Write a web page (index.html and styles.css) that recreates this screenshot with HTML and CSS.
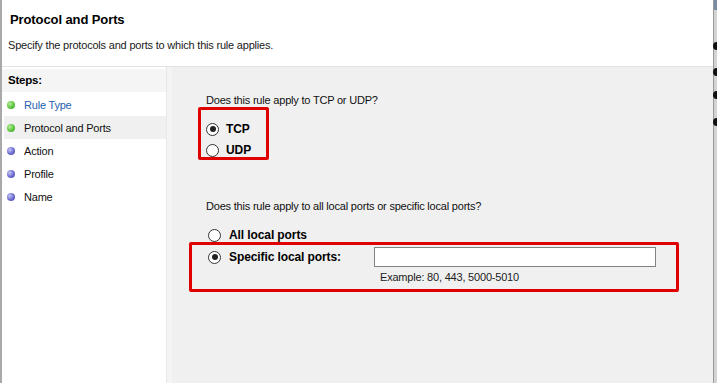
FILE: index.html
```html
<!DOCTYPE html>
<html>
<head>
<meta charset="utf-8">
<link rel="stylesheet" href="styles.css">
</head>
<body>
<div class="window">
  <div class="main">
    <header class="header">
      <h1 class="title">Protocol and Ports</h1>
      <p class="subtitle">Specify the protocols and ports to which this rule applies.</p>
    </header>
    <div class="body">
      <nav class="steps">
        <div class="steps-head">Steps:</div>
        <ul class="step-list">
          <li class="step done link"><span class="dot green"></span>Rule Type</li>
          <li class="step done current"><span class="dot green"></span>Protocol and Ports</li>
          <li class="step"><span class="dot blue"></span>Action</li>
          <li class="step"><span class="dot blue"></span>Profile</li>
          <li class="step"><span class="dot blue"></span>Name</li>
        </ul>
      </nav>
      <div class="divider"></div>
      <section class="content">
        <p class="question q1">Does this rule apply to TCP or UDP?</p>
        <div class="mark mark-proto">
          <label class="option"><span class="radio checked"></span><span class="opt-label">TCP</span></label>
          <label class="option"><span class="radio"></span><span class="opt-label">UDP</span></label>
        </div>
        <p class="question q2">Does this rule apply to all local ports or specific local ports?</p>
        <label class="option all-ports"><span class="radio"></span><span class="opt-label">All local ports</span></label>
        <div class="mark mark-ports">
          <div class="specific-row">
            <label class="option specific"><span class="radio checked"></span><span class="opt-label">Specific local ports:</span></label>
            <div class="port-field">
              <div class="textbox"></div>
              <div class="example">Example: 80, 443, 5000-5010</div>
            </div>
          </div>
        </div>
      </section>
    </div>
  </div>
  <div class="edge">
    <span class="edge-top"></span>
    <span class="nub n1"></span>
    <span class="nub n2"></span>
    <span class="nub n3"></span>
    <span class="nub n4"></span>
  </div>
</div>
</body>
</html>
```
FILE: styles.css
```css
* { box-sizing: border-box; }
html, body { margin: 0; padding: 0; }
body {
  width: 717px;
  height: 383px;
  overflow: hidden;
  font-family: "Liberation Sans", Arial, sans-serif;
  font-size: 11px;
  color: #000;
  background: #fff;
}
.window {
  display: flex;
  height: 383px;
  border-left: 2px solid #a9a9a9;
}
.main {
  flex: 1;
  display: flex;
  flex-direction: column;
  min-width: 0;
}
.header {
  height: 67px;
  background: #fff;
  border-bottom: 1px solid #e3e3e3;
  padding: 11px 0 0 8px;
}
.title {
  margin: 0;
  font-size: 13px;
  font-weight: bold;
  letter-spacing: -0.1px;
  line-height: 18px;
}
.subtitle {
  margin: 9px 0 0 -2px;
  font-size: 11px;
  letter-spacing: -0.2px;
  line-height: 14px;
  color: #1a1a1a;
}
.body {
  flex: 1;
  display: flex;
}
.steps {
  width: 164px;
  background: #fff;
  padding-top: 2px;
}
.steps-head {
  height: 23px;
  background: #f5f5f5;
  font-weight: bold;
  font-size: 11.5px;
  letter-spacing: -0.2px;
  padding: 5px 0 0 6px;
}
.step-list {
  list-style: none;
  margin: 1px 0 0 0;
  padding: 0;
}
.step {
  height: 23px;
  display: flex;
  align-items: center;
  padding-left: 5px;
  letter-spacing: -0.2px;
  color: #111;
}
.step.link { color: #1f5fb0; }
.step.current { background: #f0f0f0; margin-left: 2px; padding-left: 3px; }
.dot {
  width: 8px;
  height: 8px;
  border-radius: 50%;
  margin-right: 9px;
  flex: none;
}
.dot.green { background: radial-gradient(circle at 35% 35%, #b6ee9e 0, #5cc43c 55%, #3e9a2a 100%); }
.dot.blue { background: radial-gradient(circle at 35% 35%, #c4c4f4 0, #6b6bd0 55%, #4848a8 100%); }
.divider {
  width: 6px;
  background: #f4f4f4;
  border-left: 1px solid #e8e8e8;
}
.content {
  flex: 1;
  background: #f0f0f0;
  padding: 26px 0 0 34px;
  display: flex;
  flex-direction: column;
  align-items: flex-start;
}
.question {
  margin: 0;
  line-height: 14px;
  letter-spacing: -0.2px;
  color: #111;
}
.mark {
  border: 3px solid #e00000;
  border-radius: 2px;
}
.mark-proto {
  margin: 0 0 0 -8px;
  width: 71px;
  padding: 12px 0 0 5px;
  display: flex;
  flex-direction: column;
  gap: 7px;
}
.mark-proto .option { height: 14px; }
.option {
  display: flex;
  align-items: center;
  height: 18px;
}
.radio {
  width: 13px;
  height: 13px;
  border-radius: 50%;
  border: 1px solid #333;
  background: #fff;
  flex: none;
  position: relative;
  margin-right: 7px;
}
.radio.checked::after {
  content: "";
  position: absolute;
  left: 2.5px;
  top: 2.5px;
  width: 6px;
  height: 6px;
  border-radius: 50%;
  background: #222;
}
.opt-label {
  font-weight: bold;
  font-size: 12px;
  letter-spacing: -0.1px;
}
.q2 { margin-top: 39px; }
.all-ports {
  margin: 13px 0 0 2px;
}
.all-ports .radio { margin-right: 8px; }
.mark-ports {
  margin: -2px 0 0 -17px;
  width: 490px;
  height: 50px;
  padding: 2px 0 0 16px;
}
.specific-row {
  display: flex;
  align-items: flex-start;
}
.specific { margin-top: 1px; width: 166px; }
.specific .radio { margin-right: 8px; }
.port-field {
  display: flex;
  flex-direction: column;
}
.textbox {
  width: 282px;
  height: 20px;
  background: #fff;
  border: 1px solid #828282;
}
.example {
  margin: 3px 0 0 6px;
  letter-spacing: -0.2px;
  color: #222;
  line-height: 14px;
}
.edge {
  width: 4px;
  position: relative;
  background: #d4d4d4;
  border-left: 1px solid #9a9a9a;
}
.edge-top {
  position: absolute;
  left: 0; top: 0;
  width: 3px; height: 10px;
  background: #7b8ba3;
}
.nub {
  position: absolute;
  right: -3px;
  width: 7px;
  height: 8px;
  border-radius: 50%;
  background: #111;
}
.n1 { top: 42px; }
.n2 { top: 68px; }
.n3 { top: 91px; }
.n4 { top: 118px; }
```
